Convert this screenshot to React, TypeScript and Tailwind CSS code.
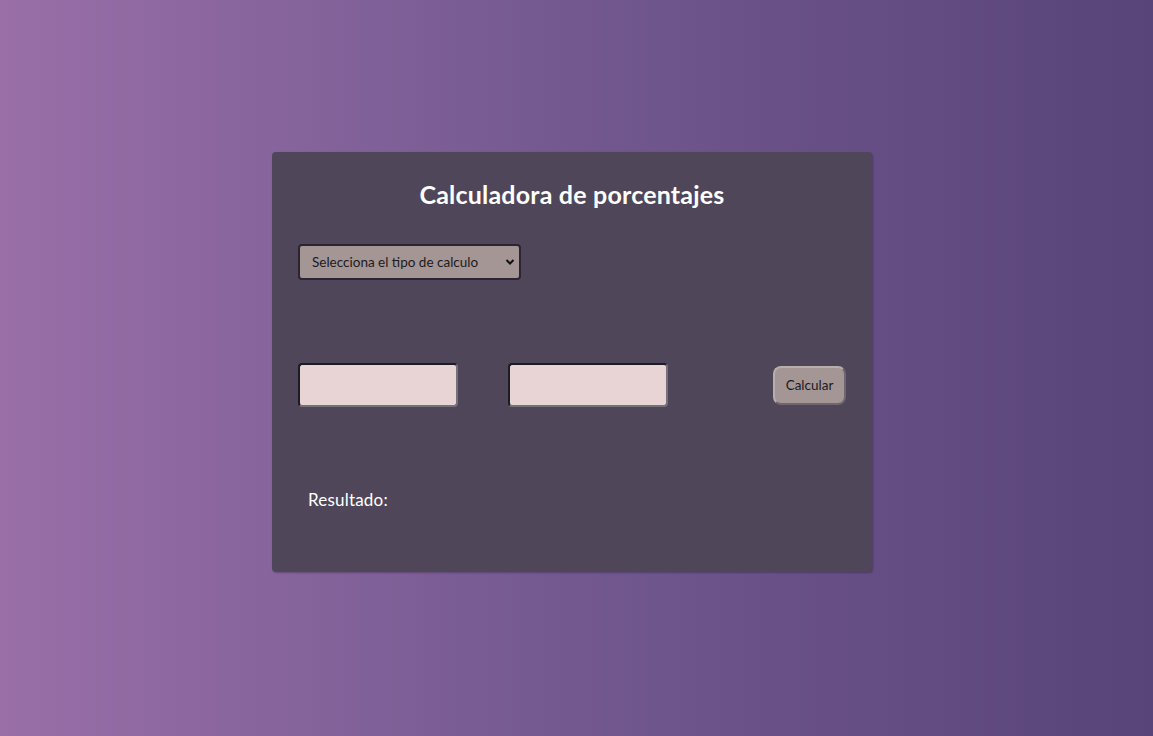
import React from "react";

export default function App() {
  return (
    <div
      className="w-full h-[736px] overflow-hidden bg-gradient-to-r from-[#9a6fa8] via-[#72588f] to-[#584479] pt-[152px]"
      style={{ fontFamily: "Lato, 'Open Sans', sans-serif" }}
    >
      <div className="ml-[272px] w-[600px] h-[420px] rounded-[4px] bg-[#4f4759] shadow-[1px_1px_2px_rgba(0,0,0,0.25)] px-[26px] pt-[26px] flex flex-col">
        <h1 className="text-center text-white text-[25px] font-bold leading-[32px] tracking-[0.2px]">
          Calculadora de porcentajes
        </h1>
        <div className="mt-[34px] relative w-[223px] h-[36px]">
          <select className="appearance-none w-full h-full rounded-[4px] border-2 border-[#2a2530] bg-[#a39695] pl-[12px] pr-[24px] text-[13.5px] text-[#1d1a20] outline-none">
            <option>Selecciona el tipo de calculo</option>
          </select>
          <svg
            className="absolute right-[6px] top-[14px] pointer-events-none"
            width="10"
            height="8"
            viewBox="0 0 10 8"
          >
            <path d="M1.5 2 L5 5.5 L8.5 2" stroke="#111" strokeWidth="2" fill="none" />
          </svg>
        </div>
        <div className="mt-[83px] flex items-center">
          <input className="w-[160px] h-[44px] rounded-[4px] bg-[#e8d4d4] border-2 border-t-[#1e1b22] border-l-[#1e1b22] border-b-[#767078] border-r-[#767078] outline-none" />
          <input className="ml-[50px] w-[160px] h-[44px] rounded-[4px] bg-[#e8d4d4] border-2 border-t-[#1e1b22] border-l-[#1e1b22] border-b-[#767078] border-r-[#767078] outline-none" />
          <button className="ml-auto w-[73px] h-[39px] rounded-[8px] bg-[#a39695] border-2 border-t-[#b9aeae] border-l-[#b9aeae] border-b-[#6f6670] border-r-[#6f6670] text-[13.5px] text-[#1d1a20]">
            Calcular
          </button>
        </div>
        <p className="mt-[83px] ml-[10px] text-white text-[17px] leading-[20px] tracking-[0.2px]">Resultado:</p>
      </div>
    </div>
  );
}
